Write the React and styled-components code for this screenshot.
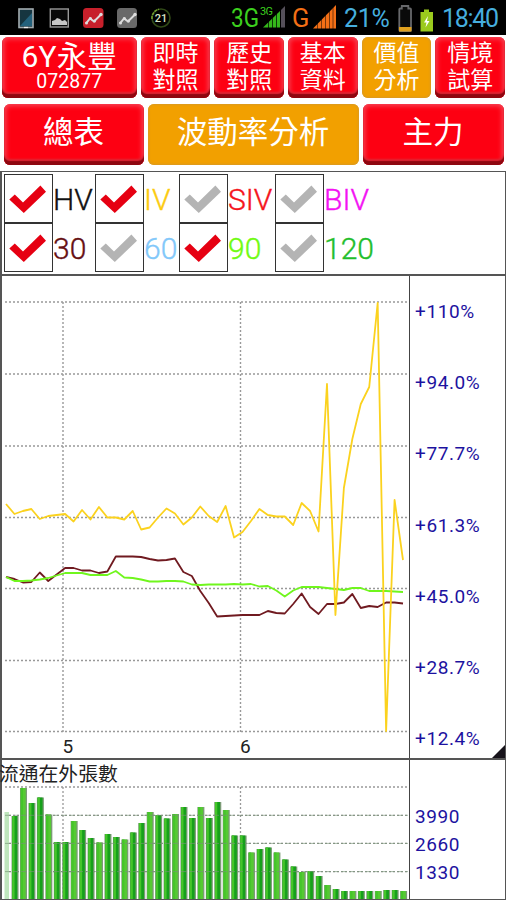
import * as React from "react"
import styled, { createGlobalStyle } from "styled-components"

const STEP = 8.447
const START = 6

const ivData = [
  504, 514, 511, 509, 519, 516, 515, 514, 521.5, 510, 519.5, 507, 517.5, 517.5,
  519.5, 511, 529.5, 527.5, 517.5, 508.5, 513.5, 524.5, 517.5, 506.5, 516, 522,
  506, 537.5, 532, 521, 509, 515, 516.5, 516.5, 525, 503, 511, 531.5, 384, 615,
  488, 439, 404, 387, 303, 731, 500, 560,
]

const hv30Data = [
  577, 579, 582.5, 582, 572.5, 581, 574.5, 568, 568, 570.5, 570.5, 573, 571.5,
  556.5, 556.5, 556.5, 557, 559, 560.5, 560, 558.5, 572, 576, 591, 603, 616.5,
  616, 615.5, 615, 615, 615, 611, 613, 613.5, 604, 593.5, 607, 614, 604, 604,
  602.5, 594, 608, 606, 607, 602.5, 602.5, 603.5,
]

const hv90Data = [
  577, 581, 581, 580.5, 579.5, 578, 575.5, 573, 573, 573, 575, 575, 575, 571,
  577.5, 578, 579.5, 581.5, 581.5, 581, 581, 581.5, 584.5, 585, 584.5, 584.5,
  584.5, 584, 584.5, 584, 586.5, 586, 590.5, 596.5, 590.5, 587, 587, 587, 588,
  589, 590, 588, 588, 591, 591, 591, 591.5, 592,
]

const volumeData = [
  812, 816, 788, 803, 797.5, 814.5, 842, 842, 821, 830, 838, 842.5, 834, 837,
  839.5, 832.5, 823, 812, 815, 818.5, 814, 807, 818, 807, 818, 802, 810, 835.5,
  835.5, 852.5, 849, 847.5, 852.5, 859.5, 866.5, 872, 871, 876, 885, 889, 891,
  891, 891, 891, 891, 890, 890, 891,
]

const menuData = [
  { lines: ["即時", "對照"] },
  { lines: ["歷史", "對照"] },
  { lines: ["基本", "資料"] },
  { lines: ["價值", "分析"], active: true },
  { lines: ["情境", "試算"] },
]

const legendData = [
  { label: "HV", color: "#111", on: true },
  { label: "IV", color: "#fccb10", on: true },
  { label: "SIV", color: "#f5141c", on: false },
  { label: "BIV", color: "#f312f3", on: false },
  { label: "30", color: "#660f12", on: true },
  { label: "60", color: "#82c8fa", on: false },
  { label: "90", color: "#70fa12", on: true },
  { label: "120", color: "#1fbe2b", on: false },
]

const percentLabels = ["+110%", "+94.0%", "+77.7%", "+61.3%", "+45.0%", "+28.7%", "+12.4%"]
const percentGrid = [302, 374, 446, 517.5, 588.5, 660.5, 731.5]
const volumeLabels = ["3990", "2660", "1330"]
const volumeGrid = [787, 815.3, 843.4, 871.6]
const monthGrid = [63, 240.5]

const toPoints = data => data.map((y, i) => `${START + i * STEP},${y}`).join(" ")

const CheckMark = ({ on }) => (
  <svg width="47" height="47" viewBox="0 0 47 47">
    <path
      d="M4.300 24.600 9.800 19.400 18 27.400 35.400 10.400 41 16.700 18.800 38Z"
      fill={on ? "#e60012" : "#b4b4b4"}
    />
  </svg>
)

const StatusIcons = () => (
  <svg width="176" height="36" viewBox="0 0 176 36">
    <rect x="19" y="9" width="14" height="18.500" fill="#163540" stroke="#a4adb1" strokeWidth="1.6" />
    <path d="M20 26 32 13V26Z" fill="#23617c" />
    <path d="M24 27.500h4" stroke="#eee" strokeWidth="1.3" />
    <rect x="50.3" y="9" width="18" height="18" fill="#080808" stroke="#999" strokeWidth="1.4" />
    <path d="M52 25v-4l3-1 2-2 3 1 2 2 3-1 2 2v3Z" fill="#c6c6c6" />
    <rect x="83" y="8" width="20.5" height="20" rx="3.5" fill="#c7202b" />
    <rect x="117" y="8" width="20" height="20" rx="3.5" fill="#696969" />
    <g fill="none" stroke="#ddd" strokeWidth="2">
      <path d="M86 23.5l4-5 4 3 7-7" />
      <path d="M120 23.5l4-5 4 3 7-7" />
    </g>
    <g fill="#ddd">
      <circle cx="86.5" cy="23" r="1.5" />
      <circle cx="90.5" cy="18.5" r="1.5" />
      <circle cx="94.5" cy="21" r="1.5" />
      <circle cx="101" cy="14.5" r="1.7" />
      <circle cx="120.5" cy="23" r="1.5" />
      <circle cx="124.5" cy="18.5" r="1.5" />
      <circle cx="128.5" cy="21" r="1.5" />
      <circle cx="135" cy="14.5" r="1.7" />
    </g>
    <circle cx="161" cy="18" r="9" fill="none" stroke="#304917" strokeWidth="1.6" />
    <path d="M152 19A9 9 0 0 1 159 9.2" fill="none" stroke="#6d9b2c" strokeWidth="1.6" strokeDasharray="3 1" />
    <text x="161" y="22" textAnchor="middle" fontSize="11" fontWeight="500" fill="#dbe6c6">
      21
    </text>
  </svg>
)

const SignalIcons = () => (
  <svg width="112" height="36" viewBox="230 0 112 36">
    <text x="231" y="26.500" fontSize="25.500" textLength="28" lengthAdjust="spacingAndGlyphs" fill="#3ccf1e">
      3G
    </text>
    <text x="260" y="15" fontSize="11" textLength="13" fill="#3ccf1e">3G</text>
    <path d="M263 27.500 280 11V27.500Z" fill="#35b81b" />
    <path d="M281 10l4-4V27.500h-4Z" fill="#55505a" />
    <text x="292" y="26.500" fontSize="25.500" fill="#f36f16">G</text>
    <path d="M313 28.500 336 5V28.500Z" fill="#f36f16" />
    <g stroke="#000" strokeWidth="1">
      <path d="M268.5 8v20M272.5 16v12M276.5 8v20M280.5 8v20" opacity=".7" />
      <path d="M317.5 8v21M321.5 8v21M325.5 8v21M329.5 8v21M333 7v22" opacity=".5" />
    </g>
  </svg>
)

const BatteryIcons = () => (
  <svg width="40" height="36" viewBox="396 0 40 36">
    <path
      d="M399.3 9.5q0-1 1-1h1.5V6h6.500v2.500h1.700q1 0 1 1V30q0 1-1 1h-9.700q-1 0-1-1Z"
      fill="#0a0a0a"
      stroke="#67686b"
      strokeWidth="1.8"
    />
    <rect x="399" y="27" width="12.500" height="4.500" fill="#dfa01e" />
    <path d="M424 9.500h5v2.500h4V31.500H420.500V12H424Z" fill="#9bcb1d" />
    <path d="M428 16l-4 6.500h2.500l-1 5 4-6.500h-2.500Z" fill="#fff" />
  </svg>
)

const Series = () => (
  <svg width="410" height="482" viewBox="0 276 410 482">
    <g stroke="#999" strokeWidth="1.4" strokeDasharray="2 2">
      {percentGrid.map(y => (
        <path key={y} d={`M5 ${y}H408`} />
      ))}
      {monthGrid.map(x => (
        <path key={x} d={`M${x} 302V732`} />
      ))}
    </g>
    <g fill="none" strokeWidth="1.8" strokeLinejoin="round">
      <polyline points={toPoints(hv30Data)} stroke="#701a20" />
      <polyline points={toPoints(hv90Data)} stroke="#70f61d" />
      <polyline points={toPoints(ivData)} stroke="#fbd21e" />
    </g>
    <text x="62.500" y="753" fontSize="19" fill="#222">5</text>
    <text x="240" y="753" fontSize="19" fill="#222">6</text>
  </svg>
)

const Volume = () => (
  <svg width="410" height="114" viewBox="0 785 410 114">
    <g stroke="#999" strokeWidth="1.3" strokeDasharray="2 2">
      {volumeGrid.map(y => (
        <path key={y} d={`M5 ${y}H408`} />
      ))}
      {monthGrid.map(x => (
        <path key={x} d={`M${x} 787V899`} />
      ))}
    </g>
    {volumeData.map((y, i) => {
      const x = START + i * STEP - 2.9
      if (i === 0) {
        return <rect key={i} x="4.500" y={y} width="4.500" height={899 - y} fill="#bfe6bd" />
      }
      return (
        <g key={i}>
          <rect x={x} y={y} width="7" height={899 - y} fill="#7b9b76" />
          <rect x={x + 0.7} y={y} width="5" height={899 - y} fill={i % 3 === 2 ? "#56c934" : "#16a01b"} />
          <rect x={x + 0.7} y={y} width="2.300" height={899 - y} fill="#45c52a" />
        </g>
      )
    })}
    <g stroke="#789477" strokeWidth="1" opacity=".65">
      {volumeGrid.slice(1).map(y => (
        <path key={y} d={`M5 ${y}H408`} strokeDasharray="6 2" />
      ))}
    </g>
  </svg>
)

const App = () => (
  <>
    <GlobalStyle />
    <Screen>
      <StatusBar>
        <StatusIcons />
        <StatusRight>
          <SignalIcons />
          <Percent>21%</Percent>
          <BatteryIcons />
          <Clock>18:40</Clock>
        </StatusRight>
      </StatusBar>
      <MainMenu>
        <Button>
          <StockName>6Y永豐</StockName>
          <StockCode>072877</StockCode>
        </Button>
        {menuData.map(item => (
          <Button key={item.lines.join("")} $active={item.active}>
            {item.lines.map(line => (
              <MenuLine key={line}>{line}</MenuLine>
            ))}
          </Button>
        ))}
      </MainMenu>
      <Tabs>
        <Button $large>總表</Button>
        <Button $large $active>波動率分析</Button>
        <Button $large>主力</Button>
      </Tabs>
      <Legend>
        {legendData.map(item => (
          <LegendItem key={item.label} $color={item.color}>
            <Box>
              <CheckMark on={item.on} />
            </Box>
            <LegendText>{item.label}</LegendText>
          </LegendItem>
        ))}
      </Legend>
      <ChartPanel>
        <Plot>
          <Series />
        </Plot>
        <Axis $top={24}>
          {percentLabels.map(label => (
            <AxisLabel key={label} $height={71.2}>{label}</AxisLabel>
          ))}
          <Corner />
        </Axis>
      </ChartPanel>
      <VolumePanel>
        <Plot>
          <VolumeTitle>流通在外張數</VolumeTitle>
          <Volume />
        </Plot>
        <Axis $top={66}>
          {volumeLabels.map(label => (
            <AxisLabel key={label} $height={28.2}>{label}</AxisLabel>
          ))}
        </Axis>
      </VolumePanel>
    </Screen>
  </>
)

export default App

const GlobalStyle = createGlobalStyle`
  * {
    box-sizing: border-box;
  }

  body {
    margin: 0;
    background: #fff;
    font-family: Roboto, "Noto Sans CJK TC", sans-serif;
  }

  svg {
    display: block;
    flex: none;
  }
`

const Screen = styled.div`
  width: 506px;
  height: 900px;
  display: flex;
  flex-direction: column;
  overflow: hidden;
  background: #fff;
`

const StatusBar = styled.header`
  height: 35px;
  flex: none;
  display: flex;
  justify-content: space-between;
  overflow: hidden;
  background: #000;
`

const StatusRight = styled.div`
  display: flex;
  width: 276px;
`

const Percent = styled.span`
  width: 54px;
  padding-left: 2px;
  color: #46aede;
  font-size: 25px;
  line-height: 37px;
  letter-spacing: -0.3px;
`

const Clock = styled(Percent)`
  width: 70px;
  padding-left: 6px;
  letter-spacing: -1.300px;
`

const MainMenu = styled.nav`
  display: grid;
  grid-template-columns: 134.5px repeat(5, 69.5px);
  column-gap: 4.200px;
  height: 61px;
  margin: 2px 0 0 2px;
  flex: none;
`

const Tabs = styled.nav`
  display: grid;
  grid-template-columns: 140px 211px 141px;
  column-gap: 4px;
  height: 61px;
  margin: 6px 0 0 3.500px;
  flex: none;
`

const Button = styled.button`
  display: flex;
  flex-direction: column;
  align-items: center;
  justify-content: ${props => (props.$large ? "center" : "flex-start")};
  min-width: 0;
  padding: ${props => (props.$large ? "0 0 3px" : "3px 0 0")};
  border: 0;
  border-radius: 6px;
  color: #fff;
  font-family: inherit;
  font-size: 30.500px;
  line-height: 1;
  white-space: nowrap;
  background: ${props => (props.$active ? "#f2a000" : "#fd0012")};
  box-shadow: ${props =>
    props.$active
      ? "inset 0 0 2px 1px #d99a22"
      : "inset 0 -4px 1px #8e0710, inset 0 -6px 2px #dc2634, inset 0 0 5px 2px #f5485a"};
`

const StockName = styled.span`
  font-size: 30px;
  line-height: 34px;
  letter-spacing: 0.200px;
`

const StockCode = styled.span`
  margin-top: -2px;
  font-size: 19.500px;
  line-height: 20px;
`

const MenuLine = styled.span`
  font-size: 23px;
  line-height: 27px;
`

const Legend = styled.section`
  height: 103px;
  margin-top: 6px;
  flex: none;
  display: grid;
  grid-template-columns: 91px 84px 96px 100px;
  grid-template-rows: 49px 49px;
  padding: 2px 0 0 2px;
  border: 1px solid #555;
  border-left: 2px solid #555;
  border-bottom: 0;
`

const LegendItem = styled.label`
  display: flex;
  color: ${props => props.$color};
`

const Box = styled.span`
  width: 49px;
  height: 49px;
  flex: none;
  border: 1px solid #333;
`

const LegendText = styled.span`
  font-size: 30px;
  font-weight: 300;
  line-height: 51px;
  -webkit-text-stroke: 0.400px;
`

const ChartPanel = styled.section`
  height: 486px;
  flex: none;
  display: flex;
  border: 2px solid #555;
  border-right-width: 1px;
`

const VolumePanel = styled(ChartPanel)`
  height: 140px;
  border-top: 0;
  border-bottom-width: 1px;
`

const Plot = styled.div`
  width: 408px;
  flex: none;
  border-right: 1px solid #444;

  svg {
    margin-left: -2px;
  }
`

const Axis = styled.div`
  position: relative;
  flex: 1;
  padding: ${props => props.$top}px 0 0 5px;
  margin-top: -24px;
`

const AxisLabel = styled.div`
  height: ${props => props.$height}px;
  display: flex;
  align-items: center;
  color: #1d12a0;
  font-size: 19px;
  letter-spacing: 0.600px;
`

const Corner = styled.span`
  position: absolute;
  right: 0;
  bottom: 0;
  width: 13px;
  height: 13px;
  background: #17131a;
  clip-path: polygon(100% 0, 100% 100%, 0 100%);
`

const VolumeTitle = styled.h2`
  height: 25px;
  margin: 0 0 0 -3px;
  color: #222;
  font-size: 19.800px;
  font-weight: 400;
  line-height: 29px;
  white-space: nowrap;
`
